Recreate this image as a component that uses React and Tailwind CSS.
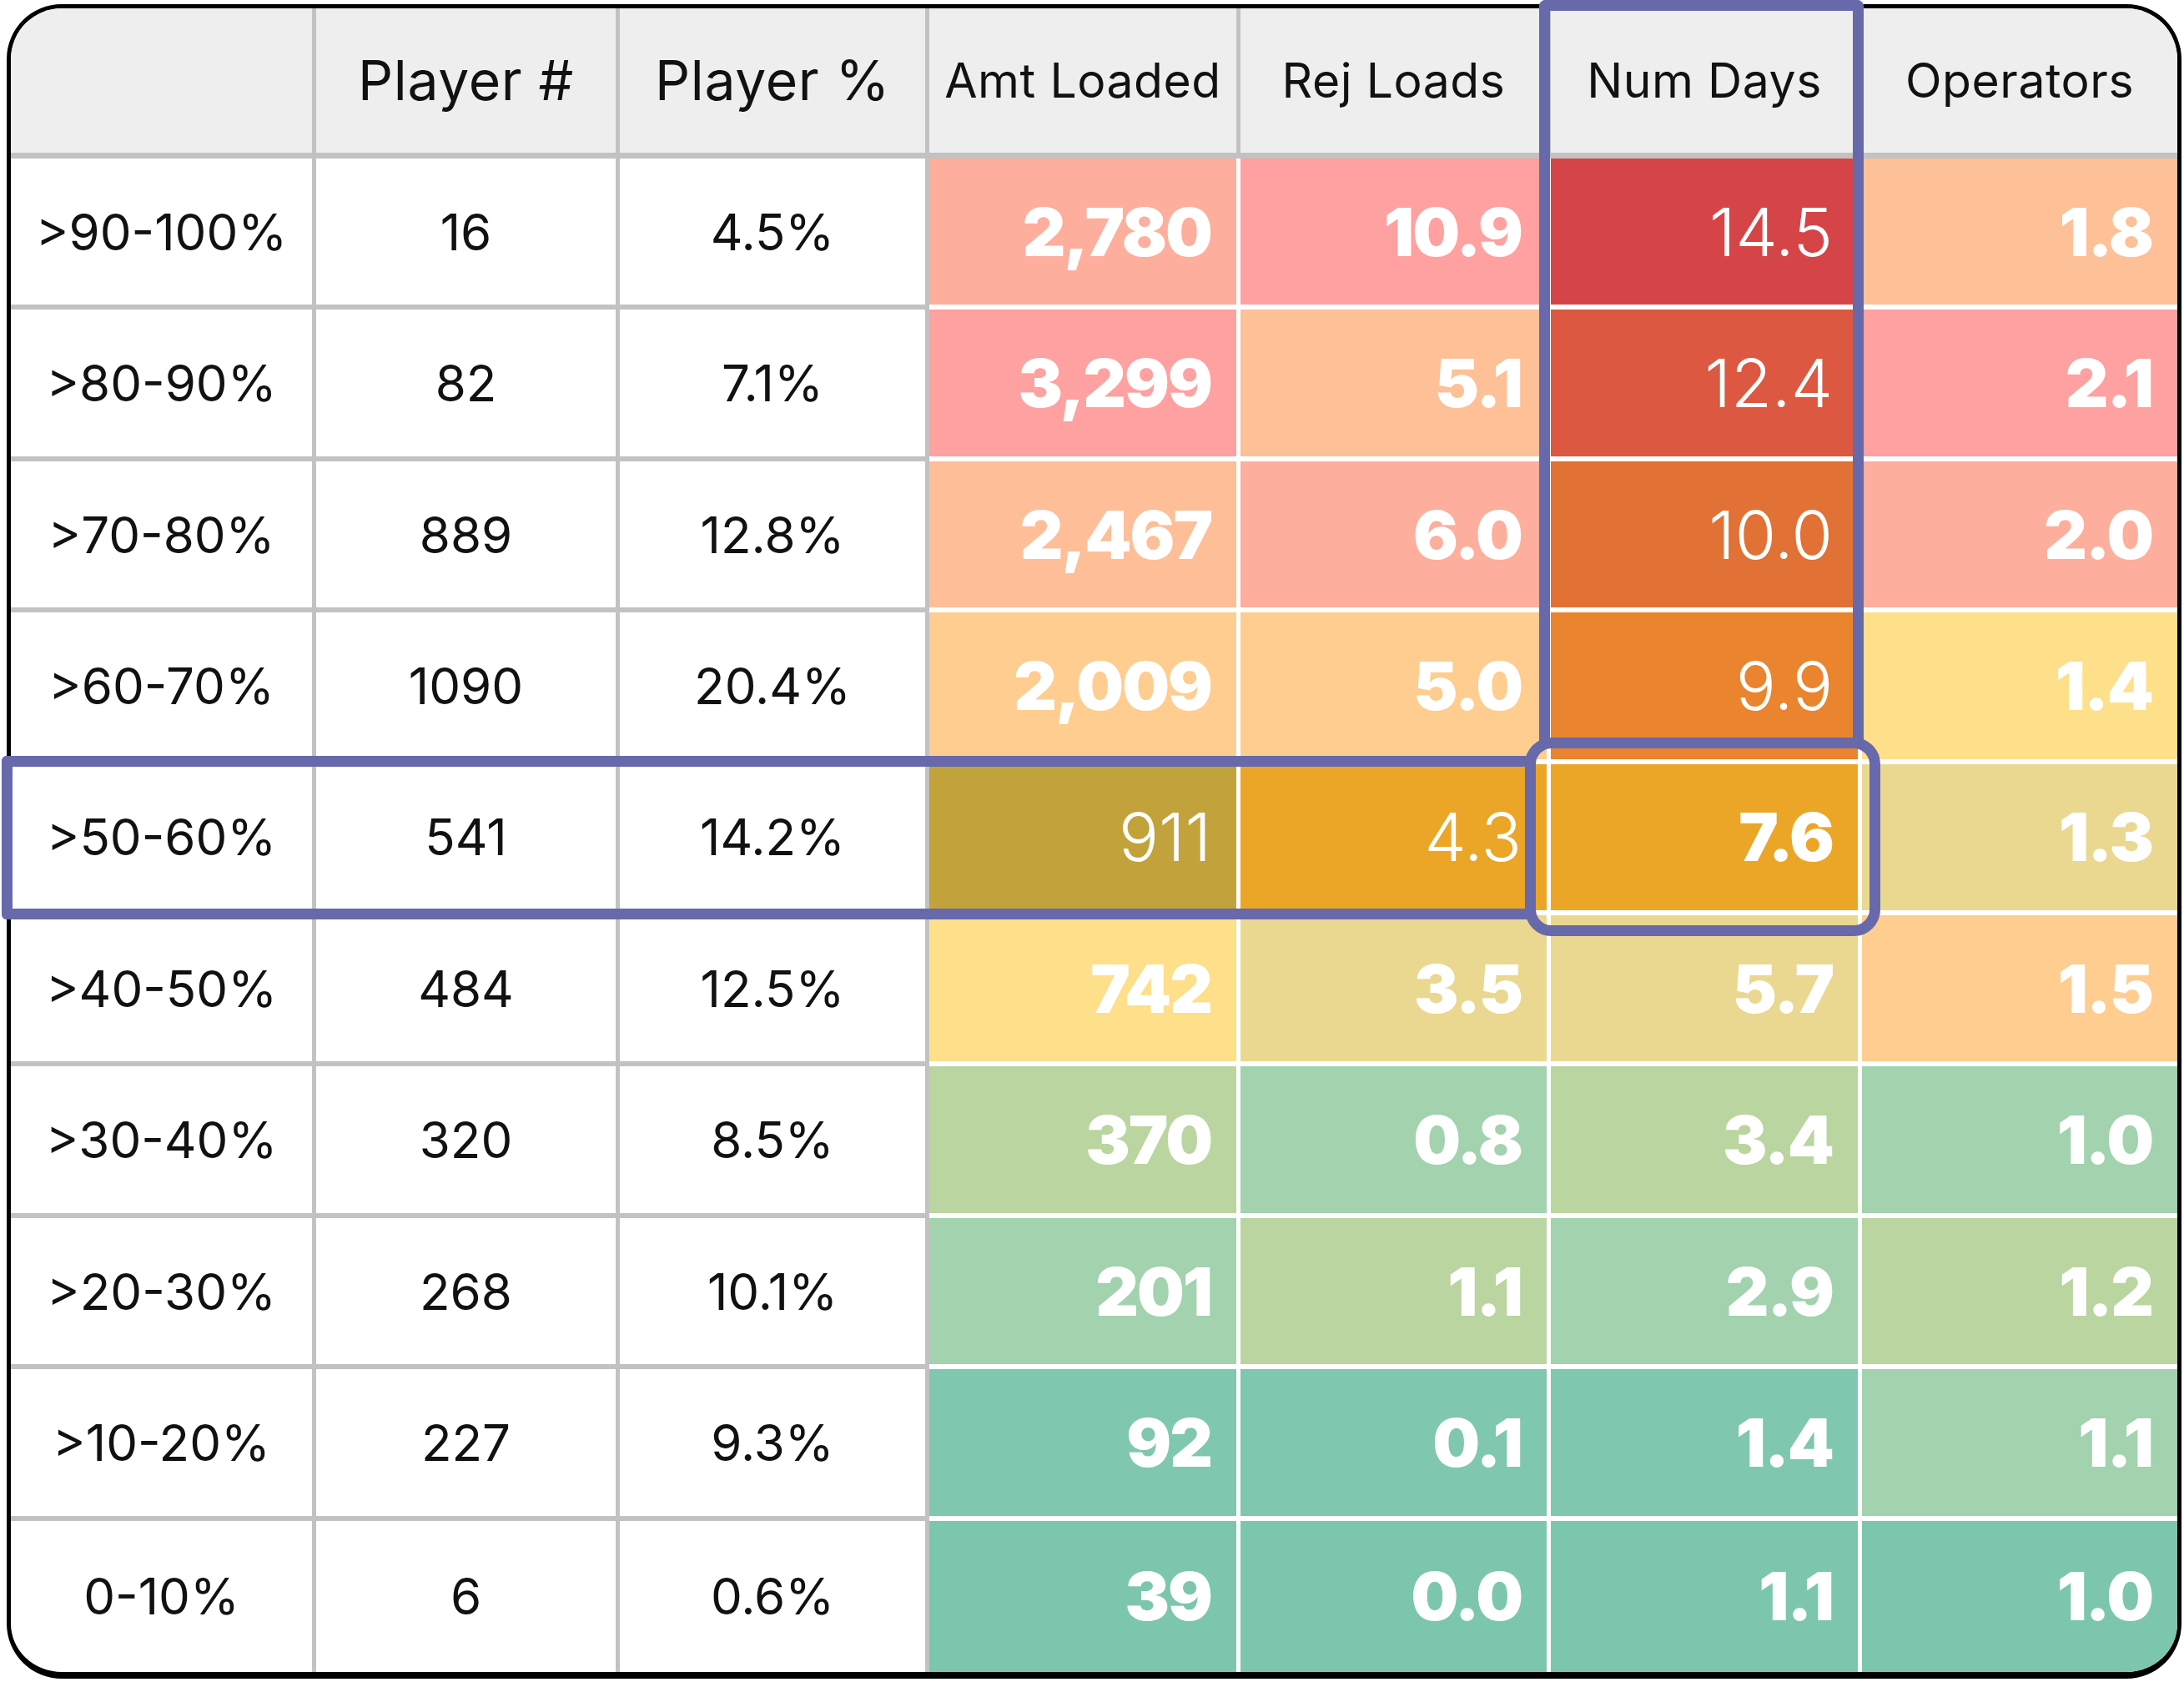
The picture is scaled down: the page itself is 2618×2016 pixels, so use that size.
import React from "react";

const headers = ["", "Player #", "Player %", "Amt Loaded", "Rej Loads", "Num Days", "Operators"];

// each colored cell: [value, bg, light?]
const rows = [
    { band: ">90-100%", num: "16", pct: "4.5%", cells: [["2,780", "bg-[#fdae9c]"], ["10.9", "bg-[#fea1a0]"], ["14.5", "bg-[#d54548]", true], ["1.8", "bg-[#fec097]"]] },
    { band: ">80-90%", num: "82", pct: "7.1%", cells: [["3,299", "bg-[#fea1a0]"], ["5.1", "bg-[#fec097]"], ["12.4", "bg-[#dc5840]", true], ["2.1", "bg-[#fea1a0]"]] },
    { band: ">70-80%", num: "889", pct: "12.8%", cells: [["2,467", "bg-[#febe98]"], ["6.0", "bg-[#feae9c]"], ["10.0", "bg-[#e17135]", true], ["2.0", "bg-[#feae9c]"]] },
    { band: ">60-70%", num: "1090", pct: "20.4%", cells: [["2,009", "bg-[#fecd8f]"], ["5.0", "bg-[#fecd8f]"], ["9.9", "bg-[#ea842e]", true], ["1.4", "bg-[#fedf8a]"]] },
    { band: ">50-60%", num: "541", pct: "14.2%", cells: [["911", "bg-[#c2a23a]", true], ["4.3", "bg-[#eba628]", true], ["7.6", "bg-[#eba628]"], ["1.3", "bg-[#ead891]"]] },
    { band: ">40-50%", num: "484", pct: "12.5%", cells: [["742", "bg-[#fedf8a]"], ["3.5", "bg-[#ead891]"], ["5.7", "bg-[#ead891]"], ["1.5", "bg-[#fecd8f]"]] },
    { band: ">30-40%", num: "320", pct: "8.5%", cells: [["370", "bg-[#bad5a0]"], ["0.8", "bg-[#a2d2ae]"], ["3.4", "bg-[#bad5a0]"], ["1.0", "bg-[#a2d2ae]"]] },
    { band: ">20-30%", num: "268", pct: "10.1%", cells: [["201", "bg-[#a2d2ae]"], ["1.1", "bg-[#bad5a0]"], ["2.9", "bg-[#a2d2ae]"], ["1.2", "bg-[#bad5a0]"]] },
    { band: ">10-20%", num: "227", pct: "9.3%", cells: [["92", "bg-[#7fc7ae]"], ["0.1", "bg-[#7fc7ae]"], ["1.4", "bg-[#7fc7ae]"], ["1.1", "bg-[#a2d2ae]"]] },
    { band: "0-10%", num: "6", pct: "0.6%", cells: [["39", "bg-[#7dc6ae]"], ["0.0", "bg-[#7dc6ae]"], ["1.1", "bg-[#7dc6ae]"], ["1.0", "bg-[#7dc6ae]"]] },
];

const cols = "grid grid-cols-[366px_364px_371px_373px_372px_373px_1fr]";

const App = () => {
    return (
        <div className="relative w-[2618px] h-[2016px] bg-white pl-[8px] pt-[5px] font-['Inter',sans-serif] text-[#111]">
            <div className="flex flex-col w-[2607px] h-[2007px] rounded-[66px] border-[5px] border-b-[8px] border-black overflow-hidden">
                <div className={cols + " h-[180px] shrink-0 bg-[#eeeeee] border-b-[7px] border-[#c2c2c2]"}>
                    {headers.map((h, i) => (
                        <div
                            key={i}
                            className={
                                "flex items-center justify-center border-[#c2c2c2] " +
                                (i < 6 ? "border-r-[5px] " : "") +
                                (i < 3 ? "text-[66px] tracking-[0.01em]" : "text-[57px] tracking-[0.01em]")
                            }
                        >
                            {h}
                        </div>
                    ))}
                </div>
                {rows.map((r, ri) => (
                    <div key={r.band} className={cols + " flex-1"}>
                        {[r.band, r.num, r.pct].map((t, i) => (
                            <div
                                key={i}
                                className={
                                    "flex items-center justify-center text-[60px] border-r-[5px] border-[#c2c2c2] " +
                                    (ri < 9 ? "border-b-[6px]" : "")
                                }
                            >
                                {t}
                            </div>
                        ))}
                        {r.cells.map(([v, bg, light], i) => (
                            <div
                                key={i}
                                className={
                                    "flex items-center justify-end pr-[30px] text-white text-[80px] border-white " +
                                    bg +
                                    (i < 3 ? " border-r-[5px]" : "") +
                                    (ri < 9 ? " border-b-[6px]" : "") +
                                    (light ? " font-light" : " font-black tracking-tight")
                                }
                            >
                                {v}
                            </div>
                        ))}
                    </div>
                ))}
            </div>

            {/* highlight: Num Days column */}
            <div className="absolute left-[1845px] top-0 w-[389px] h-[892px] border-[13px] border-b-0 border-[#6769aa] rounded-t-[8px]" />
            {/* highlight: >50-60% row */}
            <div className="absolute left-[2px] top-[906px] w-[1838px] h-[196px] border-[13px] border-r-0 border-[#6769aa] rounded-l-[6px]" />
            {/* highlight: the 7.6 cell */}
            <div className="absolute left-[1828px] top-[884px] w-[426px] h-[238px] border-[13px] border-[#6769aa] rounded-[32px]" />
        </div>
    );
};

export default App;
